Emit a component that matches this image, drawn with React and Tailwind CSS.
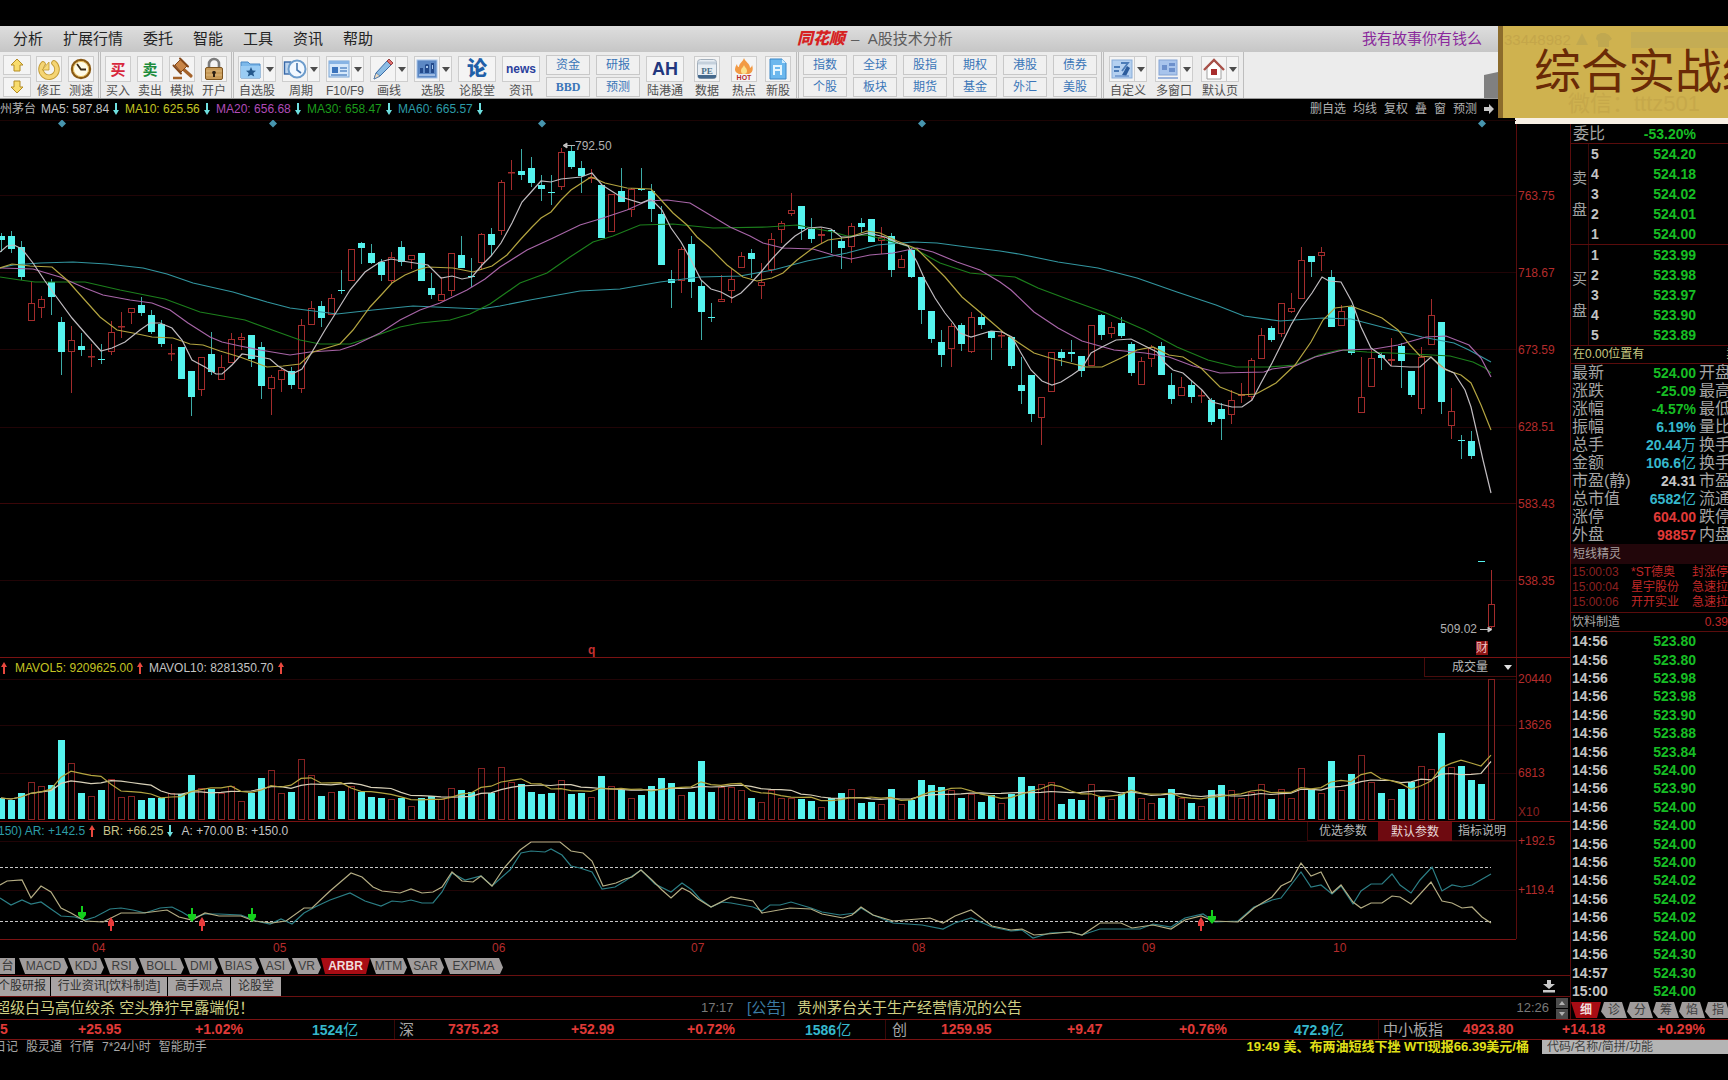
import React from "react";

/* One entry per trading day: body top, body bottom, high, low, volume bar height; "c" = falling, "r" = rising */
const DAYS = `c 236 240 233 252 21|c 236 249 231 253 19|c 247 277 241 280 26|r 303 321 282 321 37|r 299 308 296 318 33|c 282 297 279 315 34|c 322 352 317 375 79|r 340 352 326 393 56|c 346 350 333 356 26|r 356 357 344 367 23|c 359 360 344 364 29|r 332 352 321 355 40|r 326 327 312 338 22|r 308 313 308 324 23|c 305 313 297 316 19|c 315 332 310 334 21|c 324 344 320 347 21|r 353 354 344 361 26|c 347 379 347 379 25|c 371 397 371 416 44|r 357 390 357 396 31|c 354 372 332 375 30|r 367 380 355 380 26|r 339 363 333 363 33|r 337 340 333 350 18|c 335 359 335 367 26|c 347 386 342 399 41|r 377 389 375 415 49|r 370 380 368 392 26|c 371 385 367 389 27|r 325 389 319 393 60|r 308 325 301 325 44|c 306 318 301 327 23|r 298 315 294 315 27|c 290 291 270 294 28|r 249 281 249 281 33|c 243 248 242 264 27|c 253 263 244 264 22|c 262 275 259 281 21|r 257 281 252 283 20|c 247 262 241 266 21|r 255 260 255 269 13|c 253 281 253 281 21|c 288 295 273 299 23|r 294 301 277 301 20|r 253 291 253 296 31|c 255 268 236 268 29|c 276 277 258 287 27|r 234 263 233 270 51|c 234 245 228 256 26|r 182 231 180 235 52|r 172 173 160 190 37|c 171 175 149 180 35|c 168 183 157 187 27|c 185 189 175 201 25|c 192 193 175 205 26|r 152 187 148 190 39|c 151 167 145 169 25|c 168 176 161 193 26|r 177 179 169 183 22|c 185 238 185 238 43|r 194 232 194 232 33|c 191 202 168 202 29|r 189 210 188 217 21|c 189 190 168 191 24|c 191 209 184 222 33|c 214 265 206 265 41|c 279 283 270 308 36|r 249 281 247 293 24|c 244 282 236 298 27|c 286 312 281 340 58|c 317 318 303 322 27|r 299 302 275 302 32|r 279 291 268 303 32|r 256 268 252 268 29|c 253 259 249 278 21|r 282 286 263 299 17|r 239 270 233 273 29|r 223 230 221 243 21|r 210 214 193 216 21|c 206 229 206 240 20|c 229 239 218 243 18|r 234 236 228 243 12|c 230 231 230 253 21|c 241 248 237 269 26|r 226 247 223 263 30|c 223 227 218 233 16|c 219 242 219 242 17|r 237 241 227 254 15|c 236 270 233 277 30|r 259 268 255 268 15|c 250 277 248 278 19|c 277 310 277 324 39|c 311 339 311 343 34|c 342 355 330 367 32|r 326 349 323 367 29|c 325 344 323 351 21|r 317 352 312 353 25|c 317 325 313 329 17|c 331 338 331 360 24|r 335 336 330 348 16|c 337 366 337 369 25|c 385 391 357 404 42|c 375 414 375 422 33|r 397 418 397 445 35|r 352 392 352 392 37|c 352 358 349 366 15|c 352 354 340 362 20|c 356 371 356 377 19|r 325 366 325 366 35|c 315 335 314 340 22|r 327 334 322 338 20|c 323 336 317 338 25|c 344 373 342 376 42|r 361 385 357 385 21|r 347 359 345 367 16|c 346 375 342 375 21|c 385 399 373 404 30|r 387 396 377 396 21|c 385 397 381 403 16|r 395 396 389 403 13|c 400 422 398 425 29|c 409 419 403 440 34|r 400 415 390 424 29|r 394 396 383 403 21|r 360 397 358 400 27|r 335 359 328 359 35|c 328 340 326 342 20|r 303 334 303 337 30|r 308 312 293 313 21|r 260 299 247 299 51|c 256 262 256 277 29|r 252 256 247 271 26|c 277 327 270 327 58|r 311 326 305 326 29|c 307 353 305 355 45|r 397 413 357 413 64|r 358 387 350 387 37|c 355 358 353 370 26|r 359 361 338 366 20|c 346 361 343 388 30|c 371 395 371 397 37|r 357 409 347 414 53|r 315 345 299 345 50|c 322 402 322 414 86|r 411 426 388 439 52|c 440 441 435 459 53|c 441 456 431 459 39|c 561 562 561 562 35|r 604 627 570 629 140`
  .split("|")
  .map((d) => {
    const [t, a, b, hi, lo, v] = d.split(" ");
    return { up: t === "r", a: +a, b: +b, hi: +hi, lo: +lo, v: +v };
  });

const PRICE_MA = [
  ["#32959f", "0,268 13,265 40,263 73,262 107,264 143,268 167,274 193,283 233,292 267,302 290,308 337,314 373,310 413,306 480,309 500,306 530,300 580,291 620,289 660,282 700,277 740,276 773,270 807,261 847,253 877,245 913,242 937,243 967,247 1000,251 1019,254 1058,262 1098,268 1137,278 1177,292 1216,305 1244,316 1280,321 1323,318 1351,319 1382,327 1422,337 1454,343 1469,350 1491,362"],
  ["#1c7f1c", "0,277 20,280 35,282 85,282 120,290 165,299 200,312 245,320 275,331 300,340 320,344 350,344 375,336 400,327 420,323 450,320 470,314 490,304 500,297 520,283 547,273 570,257 593,242 613,236 640,225 673,224 713,228 767,227 797,225 833,232 847,236 867,235 897,243 913,248 940,263 970,273 991,275 1015,277 1038,288 1070,300 1106,313 1145,330 1177,347 1208,360 1236,367 1268,367 1295,365 1319,355 1339,350 1367,352 1414,354 1450,356 1473,362 1485,368 1491,373"],
  ["#a765a7", "0,268 33,269 60,277 85,288 103,295 130,300 152,303 170,310 188,323 210,337 222,342 240,346 260,350 290,355 310,352 340,350 355,345 380,333 400,320 420,310 440,303 467,290 485,279 500,267 527,250 553,238 580,225 603,218 627,210 647,201 667,200 690,203 710,215 730,227 750,236 763,243 783,248 813,249 833,255 851,259 870,255 893,253 917,248 933,252 957,262 980,270 1000,282 1011,290 1034,312 1058,328 1082,341 1114,350 1145,353 1169,357 1193,366 1220,373 1264,372 1272,369 1295,366 1315,357 1343,350 1374,349 1398,345 1426,337 1446,336 1469,345 1481,358 1491,377"],
  ["#b3a440", "0,268 12,264 30,266 52,267 67,280 83,298 100,317 117,330 133,333 152,337 173,338 190,344 203,345 220,351 240,357 267,367 283,366 300,364 313,352 340,344 353,330 370,307 383,293 392,283 405,275 417,270 428,267 453,268 473,272 492,266 507,255 520,240 532,227 541,218 551,212 561,200 571,190 591,177 605,183 627,188 651,189 662,201 673,213 687,225 697,237 710,248 727,265 743,277 757,281 772,278 783,273 797,260 813,248 828,240 850,237 867,231 880,233 897,241 917,249 928,260 945,277 962,297 981,313 1003,332 1019,343 1034,353 1050,358 1070,363 1086,367 1102,367 1121,358 1137,350 1153,347 1169,355 1183,357 1201,368 1220,387 1240,395 1256,394 1276,383 1295,365 1311,342 1323,320 1335,308 1351,306 1367,312 1382,318 1398,330 1410,345 1420,356 1431,357 1446,370 1461,375 1471,383 1481,405 1491,430"],
  ["#c0bcc0", "0,252 7,246 14,245 22,249 33,263 45,281 55,295 72,318 85,333 101,351 112,348 125,342 140,330 150,323 160,323 172,328 182,340 192,360 205,367 216,374 222,374 232,365 242,354 255,356 270,359 278,366 292,374 302,369 312,352 325,330 337,311 350,290 365,272 380,262 391,259 402,261 415,263 428,265 441,278 452,276 462,279 472,277 482,265 491,256 501,243 512,223 522,202 532,191 541,181 551,182 561,179 581,177 592,173 602,185 621,197 641,203 651,199 662,210 671,228 681,242 691,260 701,280 711,289 721,292 732,298 741,293 751,283 761,272 771,260 785,245 795,236 808,228 821,227 831,229 841,237 851,237 868,233 885,237 898,243 908,246 917,262 925,280 935,298 945,313 953,323 960,333 971,337 991,331 1002,332 1012,337 1021,353 1031,370 1042,381 1052,385 1061,382 1072,375 1082,368 1091,353 1102,347 1116,340 1131,339 1143,345 1157,352 1165,363 1173,370 1183,373 1193,382 1202,390 1212,402 1232,407 1242,407 1252,400 1261,383 1272,363 1282,343 1291,325 1301,308 1312,293 1322,277 1329,281 1341,282 1352,302 1361,327 1371,348 1381,355 1391,366 1410,367 1420,367 1431,357 1441,367 1454,373 1465,390 1471,407 1477,433 1483,460 1491,493"],
];

const AR = "0,898 11,905 22,900 31,904 41,902 51,909 61,916 75,917 85,920 95,917 110,909 121,908 133,910 145,913 160,908 172,907 182,912 192,918 205,914 219,914 241,915 256,921 270,924 281,919 292,924 304,913 315,907 330,900 350,893 365,901 381,906 392,901 402,902 411,900 422,903 433,903 442,892 452,873 465,880 481,876 492,886 510,870 521,853 531,851 545,852 551,849 562,855 571,866 580,868 592,872 602,889 615,887 625,881 641,870 655,884 671,892 682,883 692,890 700,899 711,907 722,902 731,903 753,907 762,911 770,905 780,905 791,902 811,908 822,912 840,915 855,913 861,908 873,915 893,923 922,925 943,929 955,923 971,918 992,927 1011,931 1022,930 1033,938 1050,933 1070,932 1082,935 1100,929 1140,929 1153,924 1171,927 1185,918 1203,914 1215,922 1238,921 1254,907 1272,900 1281,898 1291,885 1301,872 1311,887 1321,885 1332,894 1341,886 1353,904 1361,891 1371,884 1382,884 1392,874 1400,885 1411,893 1420,880 1432,867 1442,891 1452,885 1462,887 1472,885 1491,874";
const BR = "0,885 7,881 22,880 31,898 41,886 51,892 61,908 71,913 85,921 103,922 121,913 143,913 167,910 179,917 192,920 205,913 219,916 241,916 254,921 272,923 286,921 304,908 312,908 330,891 351,873 362,877 373,887 382,891 400,893 411,889 422,893 433,892 442,887 452,872 462,881 473,882 481,876 492,886 504,868 520,850 531,842 560,842 571,851 583,853 592,861 603,886 616,883 625,879 632,877 641,870 652,880 662,890 671,898 682,888 690,892 698,899 711,907 731,897 753,901 762,913 790,908 811,909 822,914 843,918 852,915 861,907 873,915 893,921 930,918 943,923 955,916 971,910 992,926 1011,930 1022,929 1034,935 1047,934 1070,932 1082,935 1100,923 1121,923 1132,928 1153,925 1171,929 1185,920 1201,916 1213,921 1238,922 1254,908 1272,897 1281,886 1291,881 1301,863 1311,876 1321,872 1332,893 1341,885 1353,902 1361,908 1371,903 1382,903 1392,896 1400,897 1411,904 1431,882 1442,901 1452,903 1462,908 1472,907 1482,917 1491,923";

const dayX = (i) => 1 + i * 10;

function volumeAverage(n) {
  return DAYS.map((_, i) => {
    const part = DAYS.slice(Math.max(0, i - n + 1), i + 1);
    const avg = part.reduce((s, d) => s + d.v, 0) / part.length;
    return `${dayX(i)},${(819 - avg).toFixed(1)}`;
  }).join(" ");
}

function GridLines({ ys, color = "#210406" }) {
  return ys.map((y) => <line key={y} x1="0" x2="1516" y1={y} y2={y} stroke={color} />);
}

function PriceChart() {
  return (
    <svg viewBox="0 120 1516 537" preserveAspectRatio="none" className="block h-[537px] w-full" aria-label="日K线">
      <GridLines ys={[195.5, 272.5, 349.5, 427.5, 580.5]} />
      <GridLines ys={[503.5]} color="#3a0608" />
      <GridLines ys={[120.5]} color="#1c0404" />
      {DAYS.map((d, i) => {
        const x = dayX(i);
        if (d.up) {
          return (
            <g key={i} stroke="#a32c2c" fill="none">
              <path d={`M${x + 0.5} ${d.hi}V${d.a}M${x + 0.5} ${d.b}V${d.lo}`} />
              <rect x={x - 2.5} y={d.a + 0.5} width="6" height={Math.max(d.b - d.a - 1, 0.5)} />
            </g>
          );
        }
        return (
          <g key={i} fill="#55f3ee">
            <rect x={x} y={d.hi} width="1" height={d.lo - d.hi} opacity="0.7" />
            <rect x={x - 3} y={d.a} width="7" height={d.b - d.a} />
          </g>
        );
      })}
      {PRICE_MA.map(([c, pts]) => (
        <polyline key={c} points={pts} fill="none" stroke={c} strokeWidth="1.2" />
      ))}
      {[62, 273, 542, 922, 1482].map((x) => (
        <path key={x} d={`M${x} 119.5l4 4-4 4-4-4z`} fill="#4795ae" />
      ))}
      <path d="M575 145.500H564M567 143l-4 2.500 4 2.500z" stroke="#b8b8b8" fill="#e0e0e0" />
      <path d="M1480 629.500H1490M1488 627l4 2.500-4 2.500z" stroke="#b8b8b8" fill="#e0e0e0" />
    </svg>
  );
}

function VolumeChart() {
  return (
    <svg viewBox="0 677 1516 144" preserveAspectRatio="none" className="block h-[144px] w-full" aria-label="成交量">
      <GridLines ys={[679.5, 725.5, 773.5]} />
      {DAYS.map((d, i) => {
        const x = dayX(i);
        return d.up ? (
          <rect key={i} x={x - 2.5} y={819.5 - d.v} width="6" height={d.v} fill="none" stroke="#862222" />
        ) : (
          <rect key={i} x={x - 3} y={819 - d.v} width="7" height={d.v} fill="#55f3ee" />
        );
      })}
      <polyline points={volumeAverage(10)} fill="none" stroke="#d8d0b8" strokeWidth="1.2" />
      <polyline points={volumeAverage(5)} fill="none" stroke="#b3a440" strokeWidth="1.2" />
    </svg>
  );
}

function ArbrChart() {
  return (
    <svg viewBox="0 841 1516 98" preserveAspectRatio="none" className="block h-[98px] w-full" aria-label="ARBR">
      <GridLines ys={[841.5, 890.5]} />
      <path d="M0 867.5H1491M0 921.500H1491" stroke="#c8c8c8" strokeWidth="1.2" strokeDasharray="3 2" />
      <polyline points={AR} fill="none" stroke="#2c7f86" strokeWidth="1.2" />
      <polyline points={BR} fill="none" stroke="#b5ae84" strokeWidth="1.2" />
      {[[82, 906], [192, 908], [252, 908], [1212, 910]].map(([x, y]) => (
        <path key={x} d={`M${x - 1} ${y}h2v6h3v3l-4 5-4-5v-3h3z`} fill="#13cf1c" />
      ))}
      {[[111, 931], [202, 931], [1201, 931]].map(([x, y]) => (
        <path key={x} d={`M${x - 1} ${y}h2v-5h2v-4l-3-5-3 5v4h2z`} fill="#e83a3a" />
      ))}
    </svg>
  );
}

function Arrow({ up }) {
  return (
    <svg viewBox="0 0 6 12" className="ml-1 h-3 w-1.5 shrink-0" aria-hidden="true">
      <path d={up ? "M3 0L6 5H4V12H2V5H0z" : "M3 12L6 7H4V0H2V7H0z"} fill={up ? "#e8483e" : "#6ee0e0"} />
    </svg>
  );
}

/* ---------- toolbar ---------- */

const ICONS = {
  undo: (
    <svg viewBox="0 0 24 24" className="size-6">
      <path d="M6 7a8 8 0 1 0 11-1" fill="none" stroke="#c29a34" strokeWidth="5.600" strokeLinecap="round" />
      <path d="M6 7a8 8 0 1 0 11-1" fill="none" stroke="#f5d574" strokeWidth="3.800" strokeLinecap="round" />
      <path d="M12 5v8H5z" fill="#f6d978" stroke="#c29a34" strokeWidth="0.8" />
    </svg>
  ),
  clock: (
    <svg viewBox="0 0 24 24" className="size-6">
      <circle cx="12" cy="12" r="9" fill="#fffbe8" stroke="#8a5a14" strokeWidth="2.4" />
      <circle cx="12" cy="12" r="7.600" fill="none" stroke="#e8c060" />
      <path d="M8 7l4 5.500h5" fill="none" stroke="#3a2a14" strokeWidth="1.8" />
    </svg>
  ),
  buy: <span className="text-[15px] font-bold leading-none text-[#d8283c]">买</span>,
  sell: <span className="text-[15px] font-bold leading-none text-[#1c8c3c]">卖</span>,
  gavel: (
    <svg viewBox="0 0 24 24" className="size-6">
      <path d="M12 11l9 8" stroke="#a4622a" strokeWidth="3.2" strokeLinecap="round" />
      <path d="M5 8l6-6 6 7-6 6z" fill="#c98648" stroke="#84481a" />
      <path d="M3.500 8.500l7.500 8M10 1.500l8 8" stroke="#84481a" strokeWidth="2" strokeLinecap="round" />
      <path d="M3 21h9" stroke="#a4622a" strokeWidth="2.500" />
    </svg>
  ),
  lock: (
    <svg viewBox="0 0 24 24" className="size-6">
      <path d="M7 11V7a5 5 0 0 1 10 0v4" fill="none" stroke="#7c7c7c" strokeWidth="2.600" />
      <rect x="3.500" y="10.500" width="17" height="12" rx="1.500" fill="#c79a58" stroke="#7c5420" />
      <path d="M4 14h16M4 18h16" stroke="#dcb87c" />
      <path d="M12 14a1.600 1.600 0 0 1 1 3v3h-2v-3a1.600 1.600 0 0 1 1-3" fill="#2c2014" />
    </svg>
  ),
  folder: (
    <svg viewBox="0 0 24 24" className="size-6">
      <path d="M2 5h7l2 2h10v14H2z" fill="#7cb8ea" stroke="#4a88c4" />
      <path d="M2 9h19v12H2z" fill="#9accf4" />
      <path d="M12 10l1.500 3.500 3.500.3-2.700 2.300.9 3.500-3.200-1.900-3.200 1.900.9-3.500L7 13.800l3.500-.3z" fill="#24588c" />
    </svg>
  ),
  period: (
    <svg viewBox="0 0 24 24" className="size-6">
      <rect x="1.500" y="5" width="6" height="12" fill="#bcd4ee" stroke="#3868a8" strokeWidth="1.400" />
      <circle cx="14" cy="12" r="8.500" fill="#f2f8ff" stroke="#6c9ccc" strokeWidth="2" />
      <path d="M14 6v7l4 3" fill="none" stroke="#4878b0" strokeWidth="1.600" />
    </svg>
  ),
  card: (
    <svg viewBox="0 0 24 24" className="size-6">
      <rect x="2" y="4" width="20" height="16" fill="#d6e8fa" stroke="#78a4d4" />
      <path d="M2 4h20v3H2z" fill="#88b4e4" />
      <path d="M5 10h6v6H5z" fill="#3c74bc" />
      <path d="M13 11h7M13 14h7M4 18h16" stroke="#5c8cc8" strokeWidth="1.500" />
    </svg>
  ),
  pencil: (
    <svg viewBox="0 0 24 24" className="size-6">
      <path d="M3 22l2-6L16 4l4 4L9 19z" fill="#8cbce4" stroke="#3c6ca4" />
      <path d="M16 4l2-2 4 4-2 2z" fill="#e07070" stroke="#984040" />
      <path d="M3 22l2-6 4 3z" fill="#f0dcc0" stroke="#3c6ca4" strokeWidth="0.600" />
    </svg>
  ),
  picks: (
    <svg viewBox="0 0 24 24" className="size-6">
      <rect x="2" y="3" width="20" height="18" fill="#5c88c4" stroke="#a8c4e8" />
      <path d="M5 16v-5h3v5M10 16V8a3 3 0 0 1 4 0v8M16 16V6h3v10" fill="#234a8c" />
      <path d="M11 9h2v2h-2zM17 8h1v4h-1z" fill="#a8c8ec" />
      <path d="M4 18h16" stroke="#b4ccec" strokeWidth="1.500" />
    </svg>
  ),
  forum: <span className="text-[20px] font-black leading-none text-[#1f5fa8]">论</span>,
  news: <span className="font-['Liberation_Sans'] text-[12px] font-bold leading-none text-[#2b3f9c]">news</span>,
  ah: <span className="font-['Liberation_Sans'] text-[18px] font-bold leading-none text-[#22377e]">AH</span>,
  pe: (
    <svg viewBox="0 0 24 24" className="size-6">
      <rect x="2.500" y="2.500" width="19" height="19" rx="3" fill="#e8eef4" stroke="#a4b0bc" />
      <path d="M3 18h18v1.500a2 2 0 0 1-2 2H5a2 2 0 0 1-2-2z" fill="#44688c" />
      <path d="M3 6h18" stroke="#c4d0dc" strokeWidth="3" />
      <text x="12" y="16.500" textAnchor="middle" fontFamily="Liberation Serif" fontWeight="700" fontSize="9" fill="#4c7088">PE</text>
    </svg>
  ),
  hot: (
    <svg viewBox="0 0 24 24" className="size-6">
      <path d="M12 1c1 4 6 5 6 10 2-1 2-3 2-3s3 7-3 9H7c-6-2-4-7-2-10 0 2 1 3 2 3 0-4 4-5 5-9z" fill="#f29a44" />
      <path d="M12 8c1 3 3 3 3 6 0 2-1 3-3 3s-3-1-3-3c0-3 2-3 3-6z" fill="#fbe08c" />
      <text x="12" y="23" textAnchor="middle" fontFamily="Liberation Sans" fontWeight="700" fontSize="7" fill="#b82c2c">HOT</text>
    </svg>
  ),
  newStock: (
    <svg viewBox="0 0 24 24" className="size-6">
      <path d="M4 2h12l4 4v16H4z" fill="#6cb8ee" stroke="#3c88c8" />
      <path d="M16 2v4h4" fill="#d0ecff" />
      <path d="M8 18V9h7v9M8 13h7" fill="none" stroke="#e4f6ff" strokeWidth="2" />
    </svg>
  ),
  custom: (
    <svg viewBox="0 0 24 24" className="size-6">
      <rect x="2" y="3" width="20" height="18" fill="#b4d0f0" stroke="#88acd8" />
      <path d="M4 10h6M4 14h5M11 6l7 0-6 8" fill="none" stroke="#4c7cb8" strokeWidth="1.800" />
      <path d="M12 18l5-9 3 2-4 8z" fill="#2c5c9c" />
      <path d="M5 19h14" stroke="#6c94cc" strokeWidth="1.500" />
    </svg>
  ),
  windows: (
    <svg viewBox="0 0 24 24" className="size-6">
      <rect x="3" y="3" width="18" height="15" fill="#a8c4ec" stroke="#84a4d4" />
      <path d="M6 8h5v5H6zM13 6h6v3h-6zM13 11h6v4h-6z" fill="#6c90cc" />
      <path d="M2 21h20" stroke="#9cb4dc" strokeWidth="2" />
    </svg>
  ),
  home: (
    <svg viewBox="0 0 24 24" className="size-6">
      <path d="M5 11v11h14V11l-7-7z" fill="#fff" stroke="#a0a0a0" />
      <path d="M2 13L12 3l10 10" fill="none" stroke="#a85048" strokeWidth="2.400" />
      <rect x="9" y="12" width="6" height="6" fill="#a82c2c" />
    </svg>
  ),
};

function Tool({ icon, label, menu, wide, w = "w-8" }) {
  return (
    <button type="button" className={`flex shrink-0 flex-col items-center gap-0.5 pt-1 text-[12px] leading-[14px] text-[#505050] ${w}`}>
      <span className="flex h-[26px] items-stretch border border-[#cdcdcd] bg-[#f4f4f4]">
        <span className={`flex items-center justify-center ${wide ? "w-9" : "w-6"}`}>{ICONS[icon]}</span>
        {menu && (
          <span className="flex w-3 items-center justify-center border-l border-[#cdcdcd]">
            <svg viewBox="0 0 8 5" className="h-[5px] w-2"><path d="M0 0h8L4 5z" fill="#4c4c4c" /></svg>
          </span>
        )}
      </span>
      <span className="whitespace-nowrap">{label}</span>
    </button>
  );
}

function PairButtons({ items }) {
  return (
    <div className="flex w-[50px] shrink-0 flex-col items-center gap-0.5 pt-[3px]">
      {items.map((t) => (
        <button key={t} type="button" className={`h-5 w-11 border border-[#c8c8c8] bg-[#f0f0f0] text-[12px] leading-[17px] text-[#3b76b8] ${t === "BBD" ? "font-['Liberation_Serif'] font-bold" : ""}`}>
          {t}
        </button>
      ))}
    </div>
  );
}

const Divider = () => <div className="mx-px w-[3px] shrink-0 border-x border-[#bdbdbd]" />;

function Toolbar() {
  return (
    <div className="flex h-[47px] border-b border-[#9a9a9a] bg-[#ececec]">
      <div className="flex w-[33px] shrink-0 flex-col items-center gap-0.5 pt-[3px]">
        {[0, 1].map((i) => (
          <button key={i} type="button" aria-label={i ? "下一个" : "上一个"} className="flex h-5 w-7 items-center justify-center border border-[#cdcdcd] bg-[#f4f4f4]">
            <svg viewBox="0 0 14 14" className="size-3.5">
              <path d={i ? "M7 13L1 7h3V1h6v6h3z" : "M7 1l6 6h-3v6H4V7H1z"} fill="#f8dc6c" stroke="#b48c24" />
            </svg>
          </button>
        ))}
      </div>
      <Tool icon="undo" label="修正" />
      <Tool icon="clock" label="测速" />
      <Divider />
      <Tool icon="buy" label="买入" />
      <Tool icon="sell" label="卖出" />
      <Tool icon="gavel" label="模拟" />
      <Tool icon="lock" label="开户" />
      <Divider />
      <Tool icon="folder" label="自选股" menu w="w-11" />
      <Tool icon="period" label="周期" menu w="w-11" />
      <Tool icon="card" label="F10/F9" menu w="w-11" />
      <Tool icon="pencil" label="画线" menu w="w-11" />
      <Tool icon="picks" label="选股" menu w="w-11" />
      <Tool icon="forum" label="论股堂" wide w="w-11" />
      <Tool icon="news" label="资讯" wide w="w-11" />
      <PairButtons items={["资金", "BBD"]} />
      <PairButtons items={["研报", "预测"]} />
      <Tool icon="ah" label="陆港通" wide w="w-11" />
      <Tool icon="pe" label="数据" w="w-10" />
      <Tool icon="hot" label="热点" w="w-[34px]" />
      <Tool icon="newStock" label="新股" w="w-[34px]" />
      <Divider />
      <PairButtons items={["指数", "个股"]} />
      <PairButtons items={["全球", "板块"]} />
      <PairButtons items={["股指", "期货"]} />
      <PairButtons items={["期权", "基金"]} />
      <PairButtons items={["港股", "外汇"]} />
      <PairButtons items={["债券", "美股"]} />
      <Divider />
      <Tool icon="custom" label="自定义" menu w="w-[46px]" />
      <Tool icon="windows" label="多窗口" menu w="w-[46px]" />
      <Tool icon="home" label="默认页" menu w="w-[46px]" />
      <div className="w-px bg-[#bdbdbd]" />
      <div className="ml-auto mr-[230px] h-[26px] w-3.5 self-end bg-[#808080] [clip-path:polygon(0_3px,100%_0,100%_100%,0_100%)]" />
    </div>
  );
}

/* ---------- chart area ---------- */

const AVERAGES = [
  ["MA5: 587.84", "text-[#c4c4c4]", "w-[84px]"],
  ["MA10: 625.56", "text-[#c4c423]", "w-[91px]"],
  ["MA20: 656.68", "text-[#b04cb8]", "w-[91px]"],
  ["MA30: 658.47", "text-[#1c9c1c]", "w-[91px]"],
  ["MA60: 665.57", "text-[#2c9ca8]", "w-[91px]"],
];

function AxisColumn({ children }) {
  return <div className="w-[54px] shrink-0 border-l border-[#5a0c0c] text-[12px] text-[#b42c2c]">{children}</div>;
}

function ChartArea() {
  return (
    <section>
      <div className="flex">
        <div className="relative min-w-0 flex-1 overflow-hidden">
          <div className="flex h-[21px] items-center pb-0.5 text-[12px]">
            <span className="mr-[5px] text-[#b4b4b4]">州茅台</span>
            {AVERAGES.map(([t, c, w]) => (
              <span key={t} className={`flex shrink-0 items-center whitespace-nowrap ${w} ${c}`}>
                {t}
                <Arrow />
              </span>
            ))}
            <div className="ml-auto mr-5 flex gap-[7px] text-[12px] text-[#b0b0b0]">
              {["删自选", "均线", "复权", "叠", "窗", "预测"].map((t) => (
                <button key={t} type="button" className="whitespace-nowrap">{t}</button>
              ))}
              <button type="button" aria-label="展开">
                <svg viewBox="0 0 12 10" className="h-2.5 w-3"><path d="M0 3h5V0l5 5-5 5V7H0z" fill="#c8c8c8" /></svg>
              </button>
            </div>
          </div>
          <PriceChart />
          <span className="absolute left-[575px] top-[39px] text-[12px] leading-4 text-[#b0b0b0]">792.50</span>
          <span className="absolute left-[588px] top-[543px] text-[12px] font-bold leading-4 text-[#c43030]">q</span>
          <span className="absolute right-[39px] top-[522px] text-[12px] leading-4 text-[#b0b0b0]">509.02</span>
          <span className="absolute right-[28px] top-[542px] bg-[#8c1414] text-[12px] leading-[14px] text-[#f0c0c0]">财</span>
        </div>
        <AxisColumn>
          <div className="pt-[58px]">
            {["763.75", "718.67", "673.59", "628.51", "583.43", "538.35"].map((t) => (
              <div key={t} className="flex h-[77px] items-center pl-px">{t}</div>
            ))}
          </div>
        </AxisColumn>
      </div>

      <div className="flex border-t border-[#7a1212]">
        <div className="min-w-0 flex-1 overflow-hidden">
          <div className="flex h-[19px] items-center text-[12px]">
            <span className="-ml-[3px] mr-1.5 flex"><Arrow up /></span>
            <span className="ml-0.5 flex w-[134px] items-center text-[#c4c423]">MAVOL5: 9209625.00<Arrow up /></span>
            <span className="flex items-center text-[#c4c4c4]">MAVOL10: 8281350.70<Arrow up /></span>
            <label className="relative ml-auto flex h-[19px] w-[92px] items-center border-b border-l border-[#4a0c0c]">
              <select aria-label="副图指标" defaultValue="成交量" className="w-full appearance-none bg-black pl-[27px] text-[12px] leading-4 text-[#b8b8b8]">
                <option>成交量</option>
              </select>
              <svg viewBox="0 0 8 5" className="absolute right-1 h-[5px] w-2"><path d="M0 0h8L4 5z" fill="#e0e0e0" /></svg>
            </label>
          </div>
          <VolumeChart />
        </div>
        <AxisColumn>
          <div className="flex h-[42px] items-center pl-px">20440</div>
          <div className="flex h-[50px] items-center pl-px">13626</div>
          <div className="flex h-[46px] items-center pl-px">6813</div>
          <div className="flex h-[25px] items-end pl-px text-[#8c2020]">X10</div>
        </AxisColumn>
      </div>

      <div className="flex border-t border-[#7a1212]">
        <div className="min-w-0 flex-1 overflow-hidden">
          <div className="flex h-[19px] items-center text-[12px]">
            <span className="-ml-0.5 mr-2 flex items-center pb-0.5 text-[#2c9ca8]">150) AR: +142.5<Arrow up /></span>
            <span className="mr-2 flex items-center pb-0.5 text-[#c8c48c]">BR: +66.25<Arrow /></span>
            <span className="pb-0.5 text-[#c4c4c4]">A: +70.00 B: +150.0</span>
            <div className="ml-auto flex text-[12px] leading-[18px] text-[#b8b8b8]">
              <button type="button" className="w-[71px] border-b border-l border-[#3a0808]">优选参数</button>
              <button type="button" className="w-[74px] bg-[#6e0a10] text-[#e8d8d8]">默认参数</button>
              <button type="button" className="w-[64px] border-b border-[#3a0808] pr-1">指标说明</button>
            </div>
          </div>
          <ArbrChart />
        </div>
        <AxisColumn>
          <div className="flex h-[38px] items-center pl-px">+192.5</div>
          <div className="flex h-[60px] items-center pl-px">+119.4</div>
        </AxisColumn>
      </div>

      <div className="flex">
        <div className="grid h-[19px] flex-1 grid-cols-[92fr_181fr_219fr_199fr_221fr_230fr_191fr_183fr] items-center border-t border-[#7a1212] pb-0.5 text-[12px] leading-4 text-[#b42c2c]">
          <span />
          {["04", "05", "06", "07", "08", "09", "10"].map((m) => <span key={m}>{m}</span>)}
        </div>
        <div className="w-[54px]" />
      </div>
    </section>
  );
}

const INDICATORS = [
  ["MACD", "w-[49px]"], ["KDJ", "w-9"], ["RSI", "w-[35px]"], ["BOLL", "w-[45px]"], ["DMI", "w-[34px]"],
  ["BIAS", "w-[41px]"], ["ASI", "w-[33px]"], ["VR", "w-[29px]"], ["ARBR", "w-[49px]"], ["MTM", "w-[37px]"],
  ["SAR", "w-[37px]"], ["EXPMA", "w-[59px]"],
];

function BottomTabs() {
  return (
    <>
      <nav className="flex h-4 text-[12px] leading-[15px]" aria-label="指标">
        <button type="button" className="mr-1 w-[15px] bg-[#a09c9c] text-[#303030]">台</button>
        {INDICATORS.map(([t, w]) => (
          <button
            key={t}
            type="button"
            className={`shrink-0 ${w} ${
              t === "ARBR"
                ? "bg-[#a80c14] font-bold text-[#f0dcdc] [clip-path:polygon(0_0,100%_0,calc(100%-4px)_100%,4px_100%)]"
                : "bg-[#a09c9c] text-[#3c3c3c] [clip-path:polygon(0_0,calc(100%-4px)_0,100%_60%,calc(100%-3px)_100%,6px_100%)]"
            }`}
          >
            {t}
          </button>
        ))}
      </nav>
      <nav className="mt-px flex h-[22px] items-center border-y border-[#6a1010] text-[12px] leading-[19px] text-[#303030]" aria-label="资讯分类">
        <button type="button" className="-ml-[6px] mr-px w-14 bg-[#a8a4a4]">个股研报</button>
        <button type="button" className="mr-px w-[116px] bg-[#a8a4a4]">行业资讯[饮料制造]</button>
        <button type="button" className="mr-px w-[62px] bg-[#a8a4a4]">高手观点</button>
        <button type="button" className="w-[50px] bg-[#a8a4a4]">论股堂</button>
        <button type="button" aria-label="收起" className="ml-auto mr-3.5">
          <svg viewBox="0 0 14 13" className="h-[13px] w-3.5"><path d="M5 0h4v4h4L7 9 1 4h4zM1 10h12v2.500H1z" fill="#c8c8c8" /></svg>
        </button>
      </nav>
      <div className="flex h-[22px] items-center text-[15px] text-[#cfcf84]">
        <div className="-ml-[5px] w-[706px] shrink-0 whitespace-nowrap">
          <a href="#news-1">超级白马高位绞杀 空头狰狞早露端倪！</a>
        </div>
        <time className="w-[46px] shrink-0 text-[13px] text-[#787878]">17:17</time>
        <span className="w-[50px] shrink-0 text-[#3c7ca4]">[公告]</span>
        <a href="#news-2" className="whitespace-nowrap">贵州茅台关于生产经营情况的公告</a>
        <time className="ml-auto mr-[7px] text-[13px] text-[#787878]">12:26</time>
        <div className="mr-0.5 flex w-3 flex-col gap-px">
          {["M0 4h6L3 0z", "M0 0h6L3 4z"].map((d, i) => (
            <button key={d} type="button" aria-label={i ? "向下" : "向上"} className="flex h-2.5 items-center justify-center bg-[#4c4c4c]">
              <svg viewBox="0 0 6 4" className="h-1 w-1.5"><path d={d} fill="#b0b0b0" /></svg>
            </button>
          ))}
        </div>
      </div>
    </>
  );
}

/* ---------- quote panel ---------- */

const GREEN = "text-[#17bd24]";
const CYAN = "text-[#36b8cc]";
const RED = "text-[#e03a38]";

const ASKS = [["5", "524.20"], ["4", "524.18"], ["3", "524.02"], ["2", "524.01"], ["1", "524.00"]];
const BIDS = [["1", "523.99"], ["2", "523.98"], ["3", "523.97"], ["4", "523.90"], ["5", "523.89"]];
const STATS = [
  ["最新", "524.00", "", GREEN, "开盘"],
  ["涨跌", "-25.09", "", GREEN, "最高"],
  ["涨幅", "-4.57%", "", GREEN, "最低"],
  ["振幅", "6.19%", "", CYAN, "量比"],
  ["总手", "20.44", "万", CYAN, "换手"],
  ["金额", "106.6", "亿", CYAN, "换手"],
  ["市盈(静)", "24.31", "", "text-[#c8c8c8]", "市盈"],
  ["总市值", "6582", "亿", CYAN, "流通"],
  ["涨停", "604.00", "", RED, "跌停"],
  ["外盘", "98857", "", RED, "内盘"],
];
const TICKS = ["523.80", "523.80", "523.98", "523.98", "523.90", "523.88", "523.84", "524.00", "523.90", "524.00", "524.00", "524.00", "524.00", "524.02", "524.02", "524.02", "524.00", "524.30", "524.30", "524.00"];

function OrderRows({ side, rows }) {
  return (
    <div className="flex border-b border-[#5a0c0c]">
      <div className="flex w-[18px] shrink-0 flex-col items-center justify-center gap-2 border-r border-[#3a0808] text-[15px] leading-6 text-[#a0a0a0]">
        {[...side].map((c) => <span key={c}>{c}</span>)}
      </div>
      <table className="w-full border-collapse text-[14px] font-bold leading-5">
        <tbody>
          {rows.map(([n, p]) => (
            <tr key={n}>
              <th className="p-0 pl-[2px] text-left text-[#c4c4c4]">{n}</th>
              <td className={`p-0 pr-8 text-right ${GREEN}`}>{p}</td>
            </tr>
          ))}
        </tbody>
      </table>
    </div>
  );
}

function QuotePanel() {
  return (
    <aside className="flex w-[158px] shrink-0 flex-col overflow-hidden border-l border-[#5a0c0c] pt-6">
      <div className="flex h-[21px] items-center justify-between border-b border-[#5a0c0c] pl-0.5 pr-8 pt-0.5 text-[16px] text-[#a4a4a4]">
        <span>委比</span>
        <b className={`text-[14px] ${GREEN}`}>-53.20%</b>
      </div>
      <OrderRows side="卖盘" rows={ASKS} />
      <OrderRows side="买盘" rows={BIDS} />
      <div className="flex h-[18px] items-center justify-between whitespace-nowrap border-b border-[#5a0c0c] pb-0.5 pl-0.5 text-[12px] text-[#c8c880]">
        <span>在0.00位置有</span>
        <span className="-mr-[10px]">卖</span>
      </div>
      <table className="w-full table-fixed border-collapse text-[16px] leading-[18px] text-[#a4a4a4]">
        <colgroup><col className="w-[62px]" /><col className="w-[63px]" /><col /></colgroup>
        <tbody>
          {STATS.map(([k, v, unit, c, k2]) => (
            <tr key={k}>
              <th className="whitespace-nowrap p-0 pl-px text-left font-normal">{k}</th>
              <td className={`whitespace-nowrap p-0 text-right text-[14px] ${c}`}>
                <b>{v}</b>
                {unit && <span className="text-[15px]">{unit}</span>}
              </td>
              <th className="whitespace-nowrap p-0 pl-[3px] text-left font-normal">{k2}</th>
            </tr>
          ))}
        </tbody>
      </table>
      <h2 className="mb-px h-5 bg-[#22060a] pl-0.5 text-[12px] leading-5 text-[#a8a0a0]">短线精灵</h2>
      <div className="border-b border-[#5a0c0c] pb-0.5 text-[12px] leading-[15px] text-[#c02828]">
        {[["15:00:03", "*ST德奥", "封涨停"], ["15:00:04", "星宇股份", "急速拉升"], ["15:00:06", "开开实业", "急速拉升"]].map(([t, n, e]) => (
          <div key={t} className="flex whitespace-nowrap pl-px">
            <time className="w-[59px] shrink-0 text-[#8c2020]">{t}</time>
            <span className="w-[61px] shrink-0">{n}</span>
            <span>{e}</span>
          </div>
        ))}
      </div>
      <div className="flex h-[19px] items-center justify-between whitespace-nowrap border-b border-[#5a0c0c] pl-px text-[12px] text-[#a8a8a8]">
        <span>饮料制造</span>
        <span className="text-[#c02828]">0.39</span>
      </div>
      <ul className="flex flex-1 flex-col pb-0.5 pr-8 text-[14px] font-bold text-[#c4c4c4]">
        {TICKS.map((p, i) => (
          <li key={i} className="flex flex-1 items-center justify-between pl-px leading-4">
            <span>{i === 19 ? "15:00" : i === 18 ? "14:57" : "14:56"}</span>
            <span className={GREEN}>{p}</span>
          </li>
        ))}
      </ul>
      <nav className="mb-px flex h-4 text-[12px] leading-4" aria-label="明细">
        {["细", "诊", "分", "筹", "焰", "指"].map((t, i) => (
          <button
            key={t}
            type="button"
            className={`shrink-0 ${
              i === 0
                ? "w-[30px] bg-[#a80c14] font-bold text-[#f0dcdc] [clip-path:polygon(0_0,100%_0,calc(100%-4px)_100%,5px_100%)]"
                : "w-[26px] bg-[#a09c9c] text-[#3c3c3c] [clip-path:polygon(3px_0,calc(100%-5px)_0,100%_100%,5px_100%,0_60%)]"
            }`}
          >
            {t}
          </button>
        ))}
      </nav>
    </aside>
  );
}

/* ---------- index and status rows ---------- */

function IndexRow() {
  const cell = "whitespace-nowrap";
  const name = "whitespace-nowrap text-[15px] font-normal text-[#a8a8a8]";
  const amount = (n) => (
    <span className={`whitespace-nowrap ${CYAN}`}>{n}<span className="text-[15px] font-normal">亿</span></span>
  );
  return (
    <div className={`flex h-[21px] items-center overflow-hidden border-y border-[#7a1212] text-[14px] font-bold leading-[19px] ${RED}`}>
      <div className="grid w-[395px] shrink-0 grid-cols-[78px_117px_117px_1fr] items-center border-r border-[#3a0808]">
        <span className={cell}>5</span><span className={cell}>+25.95</span><span className={cell}>+1.02%</span>{amount("1524")}
      </div>
      <div className="grid w-[491px] shrink-0 grid-cols-[49px_123px_116px_118px_1fr] items-center border-r border-[#3a0808] pl-1">
        <span className={name}>深</span><span className={cell}>7375.23</span><span className={cell}>+52.99</span><span className={cell}>+0.72%</span>{amount("1586")}
      </div>
      <div className="grid w-[493px] shrink-0 grid-cols-[49px_126px_112px_115px_1fr] items-center border-r border-[#3a0808] pl-1.5">
        <span className={name}>创</span><span className={cell}>1259.95</span><span className={cell}>+9.47</span><span className={cell}>+0.76%</span>{amount("472.9")}
      </div>
      <div className="grid shrink-0 grid-cols-[80px_99px_95px_1fr] items-center pl-1">
        <span className={name}>中小板指</span><span className={cell}>4923.80</span><span className={cell}>+14.18</span><span className={cell}>+0.29%</span>
      </div>
    </div>
  );
}

function StatusRow() {
  return (
    <div className="flex h-3.5 items-center overflow-hidden text-[12px] leading-[14px] text-[#a8a8a8]">
      <div className="-ml-[6px] flex gap-2 whitespace-nowrap">
        {["日记", "股灵通", "行情", "7*24小时", "智能助手"].map((t) => <button key={t} type="button">{t}</button>)}
      </div>
      <a href="#flash" className="ml-auto mr-[13px] whitespace-nowrap text-[13px] font-bold text-[#e0e018]">
        19:49 美、布两油短线下挫 WTI现报66.39美元/桶
      </a>
      <input aria-label="代码搜索" placeholder="代码/名称/简拼/功能" className="h-3.5 w-[186px] bg-[#b4b4b4] pl-[5px] text-[12px] leading-[14px] placeholder:text-[#404040]" />
    </div>
  );
}

function Banner() {
  return (
    <div className="absolute right-0 top-0 h-[98px] w-[230px] overflow-hidden">
      <div className="ml-[17px] mt-[91px] h-[7px] bg-[#f8f0e4]" />
      <div className="absolute inset-x-0 top-0 h-[92px] border-l-[5px] border-[#8c6c2c] bg-[#cfb24f]">
        <div className="absolute left-px right-0 top-1 flex items-center text-[15px] leading-5 text-[#c4a64a]">
          <span>33448982</span>
          <svg viewBox="0 0 40 16" className="ml-1 h-4 w-10"><path d="M7 1l6 12H1zM22 3l4-2h4l4 2 3 4-3 2v6H23V9l-2-2z" fill="#c0a850" /></svg>
          <span className="ml-4 h-4 flex-1 bg-[#c4ac54]" />
        </div>
        <span className="absolute left-[65px] top-[66px] whitespace-nowrap text-[22px] leading-6 text-[#c6a84a]">微信：tttz501</span>
        <p className="absolute left-[31px] top-[16px] whitespace-nowrap text-[47px] leading-[60px] text-[#6a2a06]">综合实战经</p>
      </div>
    </div>
  );
}

export default function App() {
  return (
    <div className="min-h-screen w-full overflow-hidden bg-black pt-[26px] font-['Liberation_Sans','Noto_Sans_CJK_SC',sans-serif]">
      <div className="relative">
        <header>
          <div className="flex h-[26px] items-center bg-gradient-to-b from-[#dedede] to-[#c6c6c6] pl-[13px] text-[15px] text-[#242424]">
            <nav className="flex w-[784px] shrink-0 gap-5" aria-label="主菜单">
              {["分析", "扩展行情", "委托", "智能", "工具", "资讯", "帮助"].map((t) => (
                <button key={t} type="button" className="whitespace-nowrap">{t}</button>
              ))}
            </nav>
            <h1 className="flex items-center whitespace-nowrap text-[15px] text-[#5c5c5c]">
              <span className="mr-1.5 text-[16px] font-black italic text-[#d62222]">同花顺</span>– &nbsp;A股技术分析
            </h1>
            <div className="flex flex-1 justify-end pr-[246px] text-[#8a2a9c]">
              <a href="#account" className="whitespace-nowrap">我有故事你有钱么</a>
            </div>
          </div>
          <Toolbar />
        </header>
        <Banner />
        <div className="flex">
          <main className="flex min-w-0 flex-1 flex-col">
            <ChartArea />
            <BottomTabs />
          </main>
          <QuotePanel />
        </div>
        <IndexRow />
        <StatusRow />
      </div>
    </div>
  );
}
